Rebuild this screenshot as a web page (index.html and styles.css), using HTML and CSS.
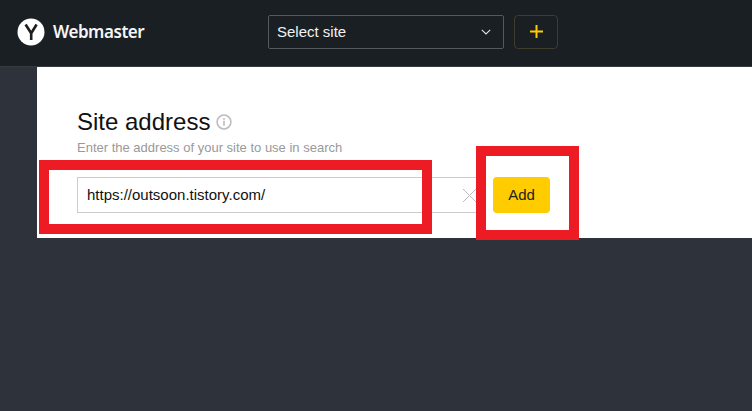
FILE: index.html
```html
<!DOCTYPE html>
<html lang="en">
<head>
<meta charset="utf-8">
<title>Webmaster</title>
<link rel="stylesheet" href="styles.css">
</head>
<body>
<header class="topbar">
  <div class="brand">
    <svg class="logo" width="28" height="28" viewBox="0 0 28 28"><circle cx="14" cy="14" r="13.5" fill="#fff"/><path d="M8.6 6.5 14.2 15.2V22M19.6 6.5 14.2 15.2" fill="none" stroke="#1a1f24" stroke-width="2.6"/></svg>
    <span class="brand-name">Webmaster</span>
  </div>
  <div class="site-select">
    <span>Select site</span>
    <svg width="10" height="6" viewBox="0 0 10 6"><path d="M.8.8 5 5 9.2.8" fill="none" stroke="#e4e4e4" stroke-width="1.1"/></svg>
  </div>
  <button class="add-site" type="button"><svg width="13" height="13" viewBox="0 0 13 13"><path d="M6.5 0v13M0 6.5h13" stroke="#fc0" stroke-width="2"/></svg></button>
</header>
<main class="page">
  <section class="panel">
    <h1 class="title">Site address
      <svg class="info" width="16" height="16" viewBox="0 0 15 15"><circle cx="7.5" cy="7.5" r="6.5" fill="none" stroke="#bbb" stroke-width="1.4"/><path d="M7.5 6.4v4.6M7.5 3.7v1.6" stroke="#bbb" stroke-width="1.5"/></svg>
    </h1>
    <p class="hint">Enter the address of your site to use in search</p>
    <div class="form-row">
      <div class="field">
        <span class="value">https://outsoon.tistory.com/</span>
        <svg class="clear" width="15" height="15" viewBox="0 0 15 15"><path d="M1 1 14 14M14 1 1 14" stroke="#bdbdbd" stroke-width="1"/></svg>
      </div>
      <button class="add" type="button">Add</button>
    </div>
    <div class="mark mark-field"></div>
    <div class="mark mark-add"></div>
  </section>
</main>
</body>
</html>
```
FILE: styles.css
```css
* { box-sizing: border-box; }
html, body { margin: 0; height: 100%; }
body {
  width: 752px;
  height: 411px;
  overflow: hidden;
  background: #2e333b;
  font-family: "Liberation Sans", Arial, sans-serif;
}
.topbar {
  height: 67px;
  background: #1a1f24;
  border-bottom: 1px solid #343a40;
  display: flex;
  align-items: center;
  padding: 0 0 3px 17px;
}
.brand { display: flex; align-items: center; width: 251px; }
.logo { display: block; }
.brand-name {
  margin-left: 8px;
  color: #f5f5f5;
  font-family: "Noto Sans", sans-serif;
  font-size: 17px;
  font-weight: 600;
  letter-spacing: -0.45px;
}
.site-select {
  width: 236px;
  height: 34px;
  border: 1px solid #55595d;
  border-radius: 2px;
  display: flex;
  align-items: center;
  justify-content: space-between;
  padding: 0 12px 0 8px;
  color: #f2f2f2;
  font-size: 15px;
}
.add-site {
  margin-left: 10px;
  width: 44px;
  height: 34px;
  border: 1px solid #3f3c2c;
  border-radius: 4px;
  background: transparent;
  display: flex;
  align-items: center;
  justify-content: center;
  padding: 0;
}
.page { padding-left: 37px; }
.panel {
  position: relative;
  height: 171px;
  background: #fff;
  padding: 41px 0 0 40px;
}
.title {
  margin: 0;
  display: flex;
  align-items: center;
  gap: 6px;
  font-size: 24px;
  line-height: 28px;
  font-weight: 400;
  color: #111;
}
.hint {
  margin: 4px 0 0;
  font-size: 13px;
  line-height: 16px;
  color: #999;
}
.form-row { display: flex; align-items: center; margin-top: 21px; }
.field {
  width: 409px;
  height: 36px;
  border: 1px solid #ccc;
  display: flex;
  align-items: center;
  justify-content: space-between;
  padding: 0 8px 0 9px;
}
.value { font-size: 15px; color: #111; margin-bottom: 1px; }
.clear { display: block; }
.add {
  margin-left: 7px;
  width: 57px;
  height: 36px;
  border: 0;
  border-radius: 4px;
  background: #fc0;
  color: #222;
  font: 15px "Liberation Sans", Arial, sans-serif;
  padding: 0 0 2px;
}
.mark { position: absolute; border: 10px solid #ed1c24; }
.mark-field { left: 2px; top: 93px; width: 393px; height: 74px; }
.mark-add { left: 439px; top: 79px; width: 103px; height: 94px; }
```
